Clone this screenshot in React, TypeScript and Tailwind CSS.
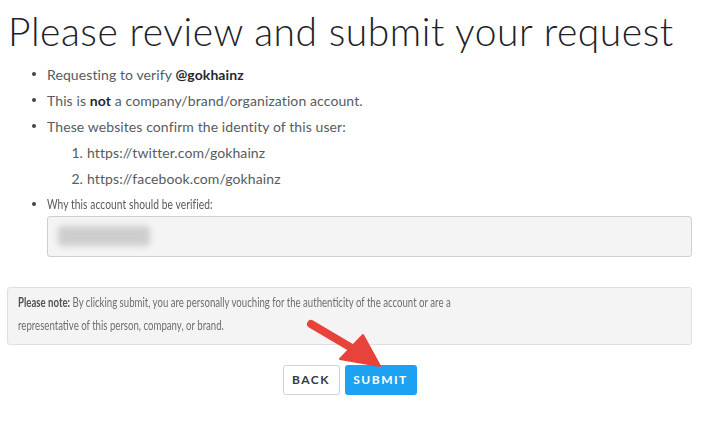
import React from "react";

export default function App() {
  return (
    <div className="relative w-[717px] h-[424px] overflow-hidden bg-white" style={{ fontFamily: "Lato, 'Open Sans', sans-serif" }}>
      <h1 className="pl-[8px] pt-[9px] text-[39px] font-light leading-[45px] text-[#1c2229] tracking-[0.55px]">
        Please review and submit your request
      </h1>
      <div className="ml-[7px] w-[685px] mt-[7px]">
        <ul className="text-[14px] text-[#555b61] tracking-[0.1px]">
          <li className="flex items-center h-[26px]">
            <span className="ml-[25px] mr-[11px] h-[4px] w-[4px] rounded-full bg-[#444]" />
            <span>Requesting to verify <b className="font-bold text-[#23292f]">@gokhainz</b></span>
          </li>
          <li className="flex items-center h-[26px]">
            <span className="ml-[25px] mr-[11px] h-[4px] w-[4px] rounded-full bg-[#444]" />
            <span>This is <b className="font-bold text-[#23292f]">not</b> a company/brand/organization account.</span>
          </li>
          <li className="flex items-center h-[26px]">
            <span className="ml-[25px] mr-[11px] h-[4px] w-[4px] rounded-full bg-[#444]" />
            <span>These websites confirm the identity of this user:</span>
          </li>
          <li className="flex items-center h-[26px]">
            <span className="ml-[62px] w-[14px] text-right">1.</span>
            <span className="ml-[4px]">https://twitter.com/gokhainz</span>
          </li>
          <li className="flex items-center h-[26px]">
            <span className="ml-[62px] w-[14px] text-right">2.</span>
            <span className="ml-[4px]">https://facebook.com/gokhainz</span>
          </li>
          <li className="flex items-center h-[25px]">
            <span className="ml-[25px] mr-[11px] h-[4px] w-[4px] rounded-full bg-[#444]" />
            <span className="inline-block origin-left scale-x-[0.73] whitespace-nowrap">Why this account should be verified:</span>
          </li>
        </ul>
        <div className="ml-[40px] w-[645px] h-[41px] rounded-[3px] border border-[#cfcfcf] bg-[#f4f4f4] px-[10px] pt-[9px]">
          <div className="h-[20px] w-[92px] rounded-[4px] bg-[#cdcdcd] blur-[3px]" />
        </div>
        <div className="mt-[30px] h-[58px] rounded-[3px] border border-[#e0e0e0] bg-[#f4f4f4] px-[10px] pt-[3px] text-[13px] leading-[23px] text-[#6b6f73]">
          <p className="origin-left scale-x-[0.74] whitespace-nowrap">
            <b className="font-bold text-[#4f5357]">Please note:</b> By clicking submit, you are personally vouching for the authenticity of the account or are a
            <br />
            representative of this person, company, or brand.
          </p>
        </div>
        <div className="mt-[20px] flex justify-center gap-[5px]">
          <button className="h-[30px] w-[57px] rounded-[3px] border border-[#cdd3d8] bg-white text-[12px] font-bold tracking-[1.5px] text-[#333a40]">
            BACK
          </button>
          <button className="h-[30px] w-[72px] rounded-[3px] bg-[#1da1f2] text-[12px] font-bold tracking-[1.5px] text-white">
            SUBMIT
          </button>
        </div>
      </div>
      <svg className="absolute left-0 top-0" width="717" height="424" viewBox="0 0 717 424">
        <line x1="311" y1="324" x2="350" y2="347" stroke="#e8433a" strokeWidth="8" strokeLinecap="round" />
        <polygon points="340,359 363,335 380,366" fill="#e8433a" strokeLinejoin="round" stroke="#e8433a" strokeWidth="2" />
      </svg>
    </div>
  );
}
